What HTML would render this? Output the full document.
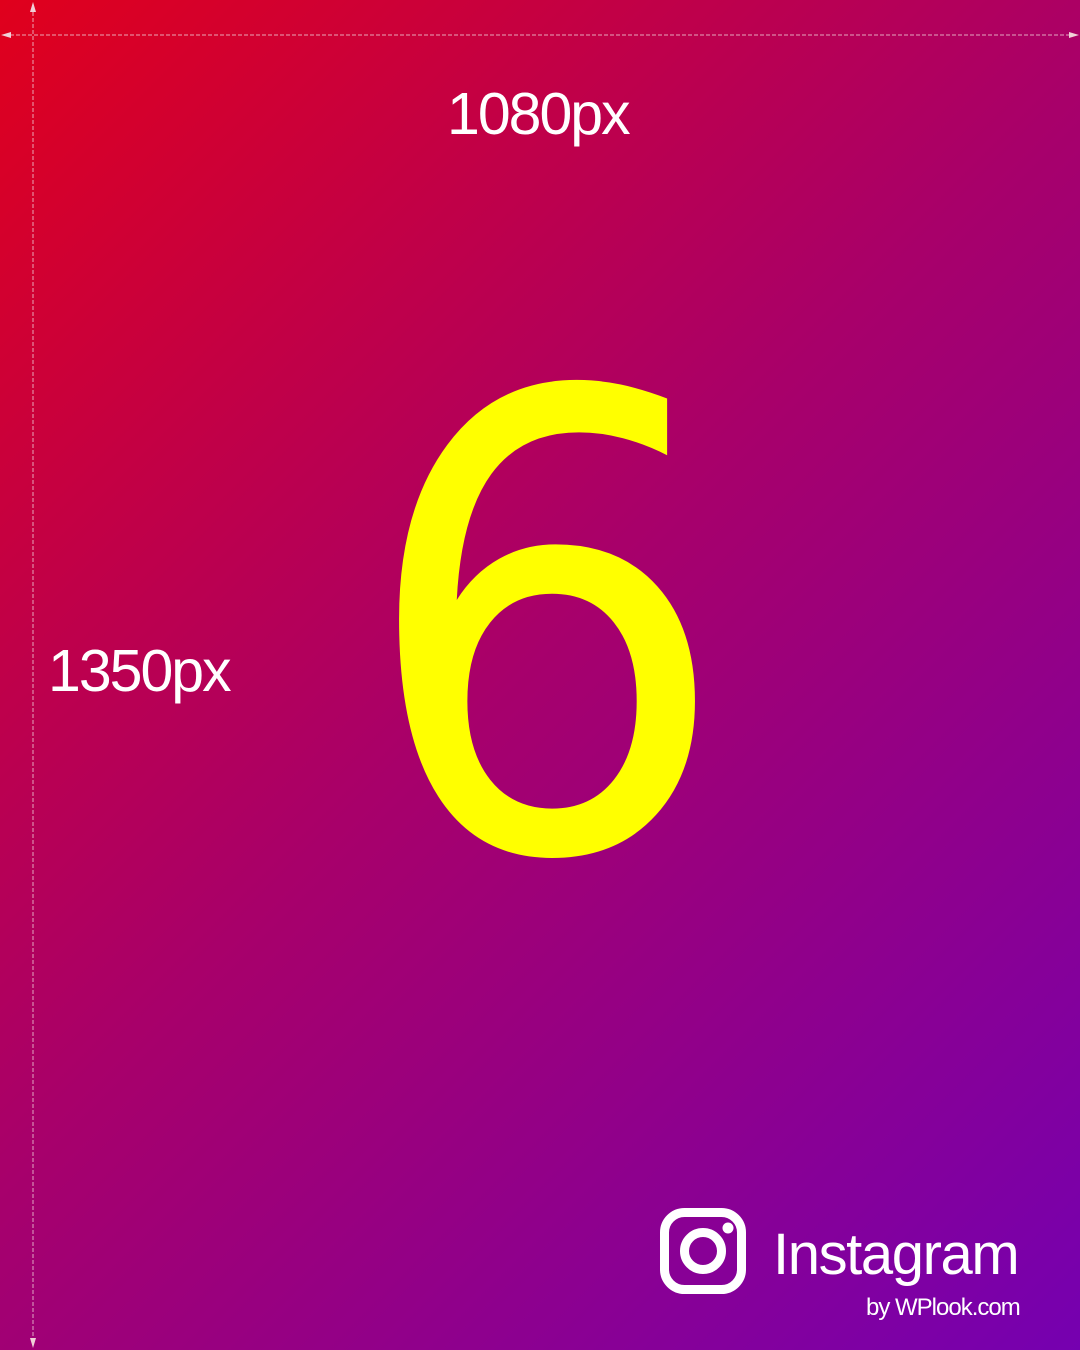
<!DOCTYPE html>
<html><head><meta charset="utf-8"><style>
html,body{margin:0;padding:0}
body{width:1080px;height:1350px;overflow:hidden;position:relative;
background:linear-gradient(135deg,#e0001c 0%,#a8006a 48%,#7500b0 100%);
font-family:"Liberation Sans",sans-serif;color:#fff}
.t{position:absolute;white-space:nowrap;line-height:1}
</style></head><body>
<svg width="1080" height="1350" style="position:absolute;left:0;top:0">
  <line x1="33" y1="6" x2="33" y2="1346" stroke="#f0d0d8" stroke-width="1" stroke-dasharray="4,2" opacity="0.8"/>
  <line x1="4" y1="35" x2="1078" y2="35" stroke="#f0d0d8" stroke-width="1" stroke-dasharray="4,2" opacity="0.8"/>
  <path d="M33 2 L30 12 L36 12 Z" fill="#f0d0d8"/>
  <path d="M33 1348 L30 1338 L36 1338 Z" fill="#f0d0d8"/>
  <path d="M1 35 L11 32 L11 38 Z" fill="#f0d0d8"/>
  <path d="M1079 35 L1069 32 L1069 38 Z" fill="#f0d0d8"/>
  <g transform="translate(545,0) scale(0.93,1)">
    <text x="0" y="849" text-anchor="middle" font-family="DejaVu Sans, sans-serif" font-size="632" fill="#ffff00">6</text>
  </g>
  <rect x="664.5" y="1212.5" width="77" height="77" rx="20" fill="none" stroke="#fff" stroke-width="9"/>
  <circle cx="703" cy="1251" r="18.5" fill="none" stroke="#fff" stroke-width="9"/>
  <circle cx="728" cy="1228" r="5.5" fill="#fff"/>
</svg>
<div class="t" style="left:447px;top:85px;font-size:59px;letter-spacing:-2px">1080px</div>
<div class="t" style="left:48px;top:642px;font-size:59px;letter-spacing:-2px">1350px</div>
<div class="t" style="left:773px;top:1226px;font-size:58px;letter-spacing:-1.4px">Instagram</div>
<div class="t" style="left:866px;top:1296px;font-size:24px;letter-spacing:-1px">by WPlook.com</div>
</body></html>
